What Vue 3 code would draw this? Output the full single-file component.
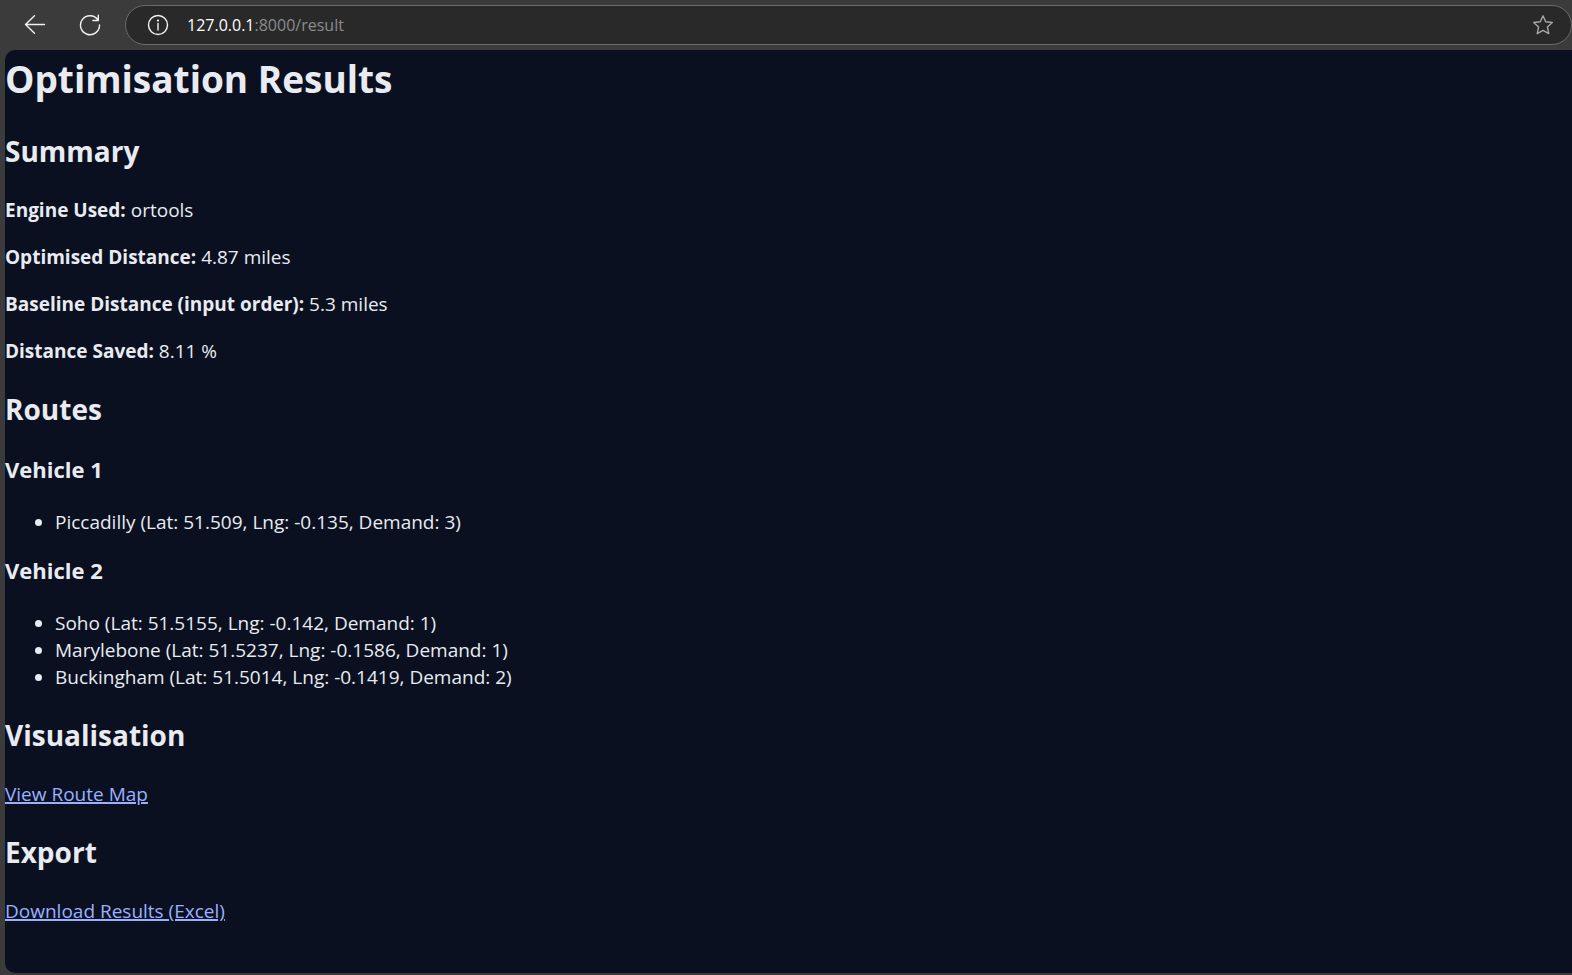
<script setup>
const summary = [
  { label: 'Engine Used:', value: 'ortools' },
  { label: 'Optimised Distance:', value: '4.87 miles' },
  { label: 'Baseline Distance (input order):', value: '5.3 miles' },
  { label: 'Distance Saved:', value: '8.11 %' },
]

const vehicles = [
  { id: 1, stops: [{ name: 'Piccadilly', lat: '51.509', lng: '-0.135', demand: 3 }] },
  {
    id: 2,
    stops: [
      { name: 'Soho', lat: '51.5155', lng: '-0.142', demand: 1 },
      { name: 'Marylebone', lat: '51.5237', lng: '-0.1586', demand: 1 },
      { name: 'Buckingham', lat: '51.5014', lng: '-0.1419', demand: 2 },
    ],
  },
]
</script>

<template>
  <div class="browser">
    <header class="toolbar">
      <button class="tool" type="button" aria-label="Back">
        <svg width="22" height="22" viewBox="0 0 22 22"><path d="M20.5 10.5H1.5M10.5 1.8L1.5 10.5l9 8.7" /></svg>
      </button>
      <button class="tool" type="button" aria-label="Refresh">
        <svg width="22" height="22" viewBox="0 0 22 22"><path d="M18.9 5.9A9.5 9.5 0 1 0 20.5 11M19.3 1.3v5.2h-5.4" /></svg>
      </button>
      <div class="address">
        <button class="site-info" type="button" aria-label="Site information">
          <svg width="22" height="22" viewBox="0 0 22 22">
            <circle cx="11" cy="11" r="9.5" />
            <path d="M11 9.5v6.5" />
            <circle class="dot" cx="11" cy="6.6" r="1.1" />
          </svg>
        </button>
        <div class="url"><span class="host">127.0.0.1</span>:8000/result</div>
        <button class="favourite" type="button" aria-label="Add to favourites">
          <svg width="22" height="22" viewBox="0 0 22 22">
            <path d="M11 1.8l2.7 6 6.6.7-4.9 4.5 1.4 6.6-5.8-3.2-5.8 3.2L6.6 13 1.7 8.5l6.6-.7z" />
          </svg>
        </button>
      </div>
    </header>

    <main class="page">
      <h1>Optimisation Results</h1>

      <h2>Summary</h2>
      <p v-for="item in summary" :key="item.label"><strong>{{ item.label }}</strong> {{ item.value }}</p>

      <h2>Routes</h2>
      <template v-for="vehicle in vehicles" :key="vehicle.id">
        <h3>Vehicle {{ vehicle.id }}</h3>
        <ul>
          <li v-for="stop in vehicle.stops" :key="stop.name">
            {{ stop.name }} (Lat: {{ stop.lat }}, Lng: {{ stop.lng }}, Demand: {{ stop.demand }})
          </li>
        </ul>
      </template>

      <h2>Visualisation</h2>
      <p><a href="#map">View Route Map</a></p>

      <h2>Export</h2>
      <p><a href="#export">Download Results (Excel)</a></p>
    </main>
  </div>
</template>

<style>
body {
  background: #3b3b3b;
}
</style>

<style scoped>
.browser {
  display: flex;
  flex-direction: column;
  box-sizing: border-box;
  min-height: 100vh;
  padding: 0 0 2px 5px;
  background: #3b3b3b;
  font-family: "Segoe UI", "Open Sans", "Noto Sans", sans-serif;
}

.toolbar {
  display: flex;
  align-items: center;
  gap: 1px;
  height: 50px;
  padding-left: 3px;
}

button {
  display: flex;
  align-items: center;
  justify-content: center;
  padding: 0;
  border: 0;
  background: none;
}

.tool {
  width: 54px;
  height: 40px;
}

svg {
  fill: none;
  stroke: #f2f2f2;
  stroke-width: 1.4;
  stroke-linecap: round;
  stroke-linejoin: round;
}

.dot {
  fill: #f2f2f2;
  stroke: none;
}

.address {
  display: flex;
  flex: 1;
  align-items: center;
  box-sizing: border-box;
  height: 40px;
  margin-left: 7px;
  padding: 0 17px 0 21px;
  border: 1px solid #6b6b6b;
  border-radius: 20px;
  background: #292929;
}

.url {
  flex: 1;
  margin-left: 18px;
  color: #8c8c8c;
  font-size: 16px;
  line-height: 24px;
}

.host {
  color: #ffffff;
}

.favourite svg {
  stroke: #a6a6a6;
}

.page {
  flex: 1;
  display: flow-root;
  padding-top: 2px;
  border-radius: 10px 0 0 10px;
  background: #0a101f;
  color: #e8ebf2;
  font-size: 19px;
  line-height: 27px;
}

h1 {
  margin: 0 0 27px;
  font-size: 37px;
  line-height: 53px;
}

h2 {
  margin: 25px 0 27px;
  font-size: 28px;
  line-height: 38px;
}

h3 {
  margin: 20px 0 25px;
  font-size: 22px;
  line-height: 29px;
}

p {
  margin: 20px 0;
}

ul {
  margin: 20px 0;
  padding-left: 50px;
}

a {
  color: #9ab0ff;
  text-decoration-thickness: 2px;
}
</style>
